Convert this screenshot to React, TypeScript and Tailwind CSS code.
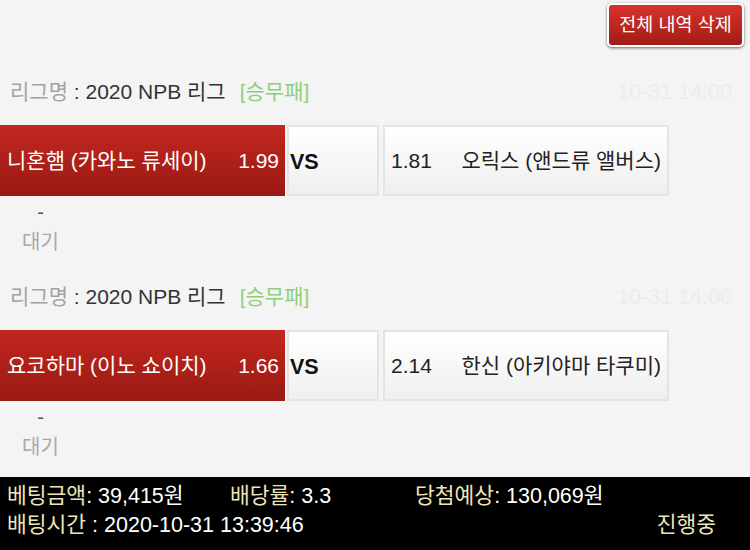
import React from "react";

interface Match {
  league: string;
  kind: string;
  time: string;
  home: string;
  homeOdds: string;
  awayOdds: string;
  away: string;
  status: string;
}

const MATCHES: Match[] = [
  {
    league: "2020 NPB 리그",
    kind: "[승무패]",
    time: "10-31 14:00",
    home: "니혼햄 (카와노 류세이)",
    homeOdds: "1.99",
    awayOdds: "1.81",
    away: "오릭스 (앤드류 앨버스)",
    status: "대기",
  },
  {
    league: "2020 NPB 리그",
    kind: "[승무패]",
    time: "10-31 14:00",
    home: "요코하마 (이노 쇼이치)",
    homeOdds: "1.66",
    awayOdds: "2.14",
    away: "한신 (아키야마 타쿠미)",
    status: "대기",
  },
];

const MatchBlock: React.FC<{ match: Match }> = ({ match }) => {
  return (
    <div>
      {/* League line */}
      <div className="h-[34px] flex items-center justify-between pl-[10px] pr-[18px] text-[21px]">
        <div className="flex items-center whitespace-nowrap">
          <span className="text-[#a3a3a3]">리그명</span>
          <span className="text-[#333333]">&nbsp;: {match.league}</span>
          <span className="text-[#8fcf7c] ml-[14px]">{match.kind}</span>
        </div>
        <span className="text-[#ececec] text-[21.5px]">{match.time}</span>
      </div>

      {/* Match row */}
      <div className="mt-[16px] h-[71px] flex text-[21px]">
        <div className="w-[285px] h-full flex items-center justify-between pl-[7px] pr-[6px] text-white bg-gradient-to-b from-[#c3271f] to-[#981a13]">
          <span className="whitespace-nowrap">{match.home}</span>
          <span>{match.homeOdds}</span>
        </div>
        <div className="ml-[2px] w-[92px] h-full flex items-center pl-[1px] pt-[3px] border-2 border-[#e4e4e4] bg-gradient-to-b from-white to-[#efefef]">
          <span className="font-bold text-[#111111] text-[21.5px]">VS</span>
        </div>
        <div className="ml-[4px] w-[286px] h-full flex items-center justify-between pl-[6px] pr-[6px] text-[#222222] border-2 border-[#e4e4e4] bg-gradient-to-b from-white to-[#efefef]">
          <span>{match.awayOdds}</span>
          <span className="whitespace-nowrap">{match.away}</span>
        </div>
      </div>

      {/* Status */}
      <div className="h-[84px] w-[81px] pt-[1px] text-center">
        <div className="h-[30px] leading-[30px] text-[20px] text-[#555555]">-</div>
        <div className="h-[30px] leading-[30px] text-[20px] text-[#a8a8a8]">{match.status}</div>
      </div>
    </div>
  );
};

export default function App() {
  return (
    <div
      className="w-[750px] h-[550px] bg-[#f4f4f4] flex flex-col overflow-hidden"
      style={{ fontFamily: '"Liberation Sans", "Noto Sans CJK KR", sans-serif' }}
    >
      <div className="flex-1 overflow-hidden">
        {/* Top bar */}
        <div className="h-[75px] flex justify-end items-start pt-[3px] pr-[6px]">
          <button className="w-[137px] h-[44px] rounded-[5px] border-2 border-white bg-gradient-to-b from-[#d8322b] to-[#a21c16] text-white text-[18.5px] shadow-[0_1px_3px_rgba(0,0,0,0.6)]">
            전체 내역 삭제
          </button>
        </div>

        {MATCHES.map((m, i) => (
          <MatchBlock key={i} match={m} />
        ))}
      </div>

      {/* Footer summary */}
      <div className="h-[73px] bg-black pt-[5px] pl-[7px] pr-[34px] text-[21.5px] text-white">
        <div className="h-[29px] flex items-center whitespace-nowrap">
          <span className="w-[223px]">
            <span className="text-[#ede4b8]">베팅금액</span>: 39,415원
          </span>
          <span className="w-[185px]">
            <span className="text-[#ede4b8]">배당률</span>: 3.3
          </span>
          <span>
            <span className="text-[#ede4b8]">당첨예상</span>: 130,069원
          </span>
        </div>
        <div className="h-[29px] flex items-center justify-between whitespace-nowrap">
          <span>
            <span className="text-[#ede4b8]">배팅시간</span> : 2020-10-31 13:39:46
          </span>
          <span className="text-[#ede4b8]">진행중</span>
        </div>
      </div>
    </div>
  );
}
